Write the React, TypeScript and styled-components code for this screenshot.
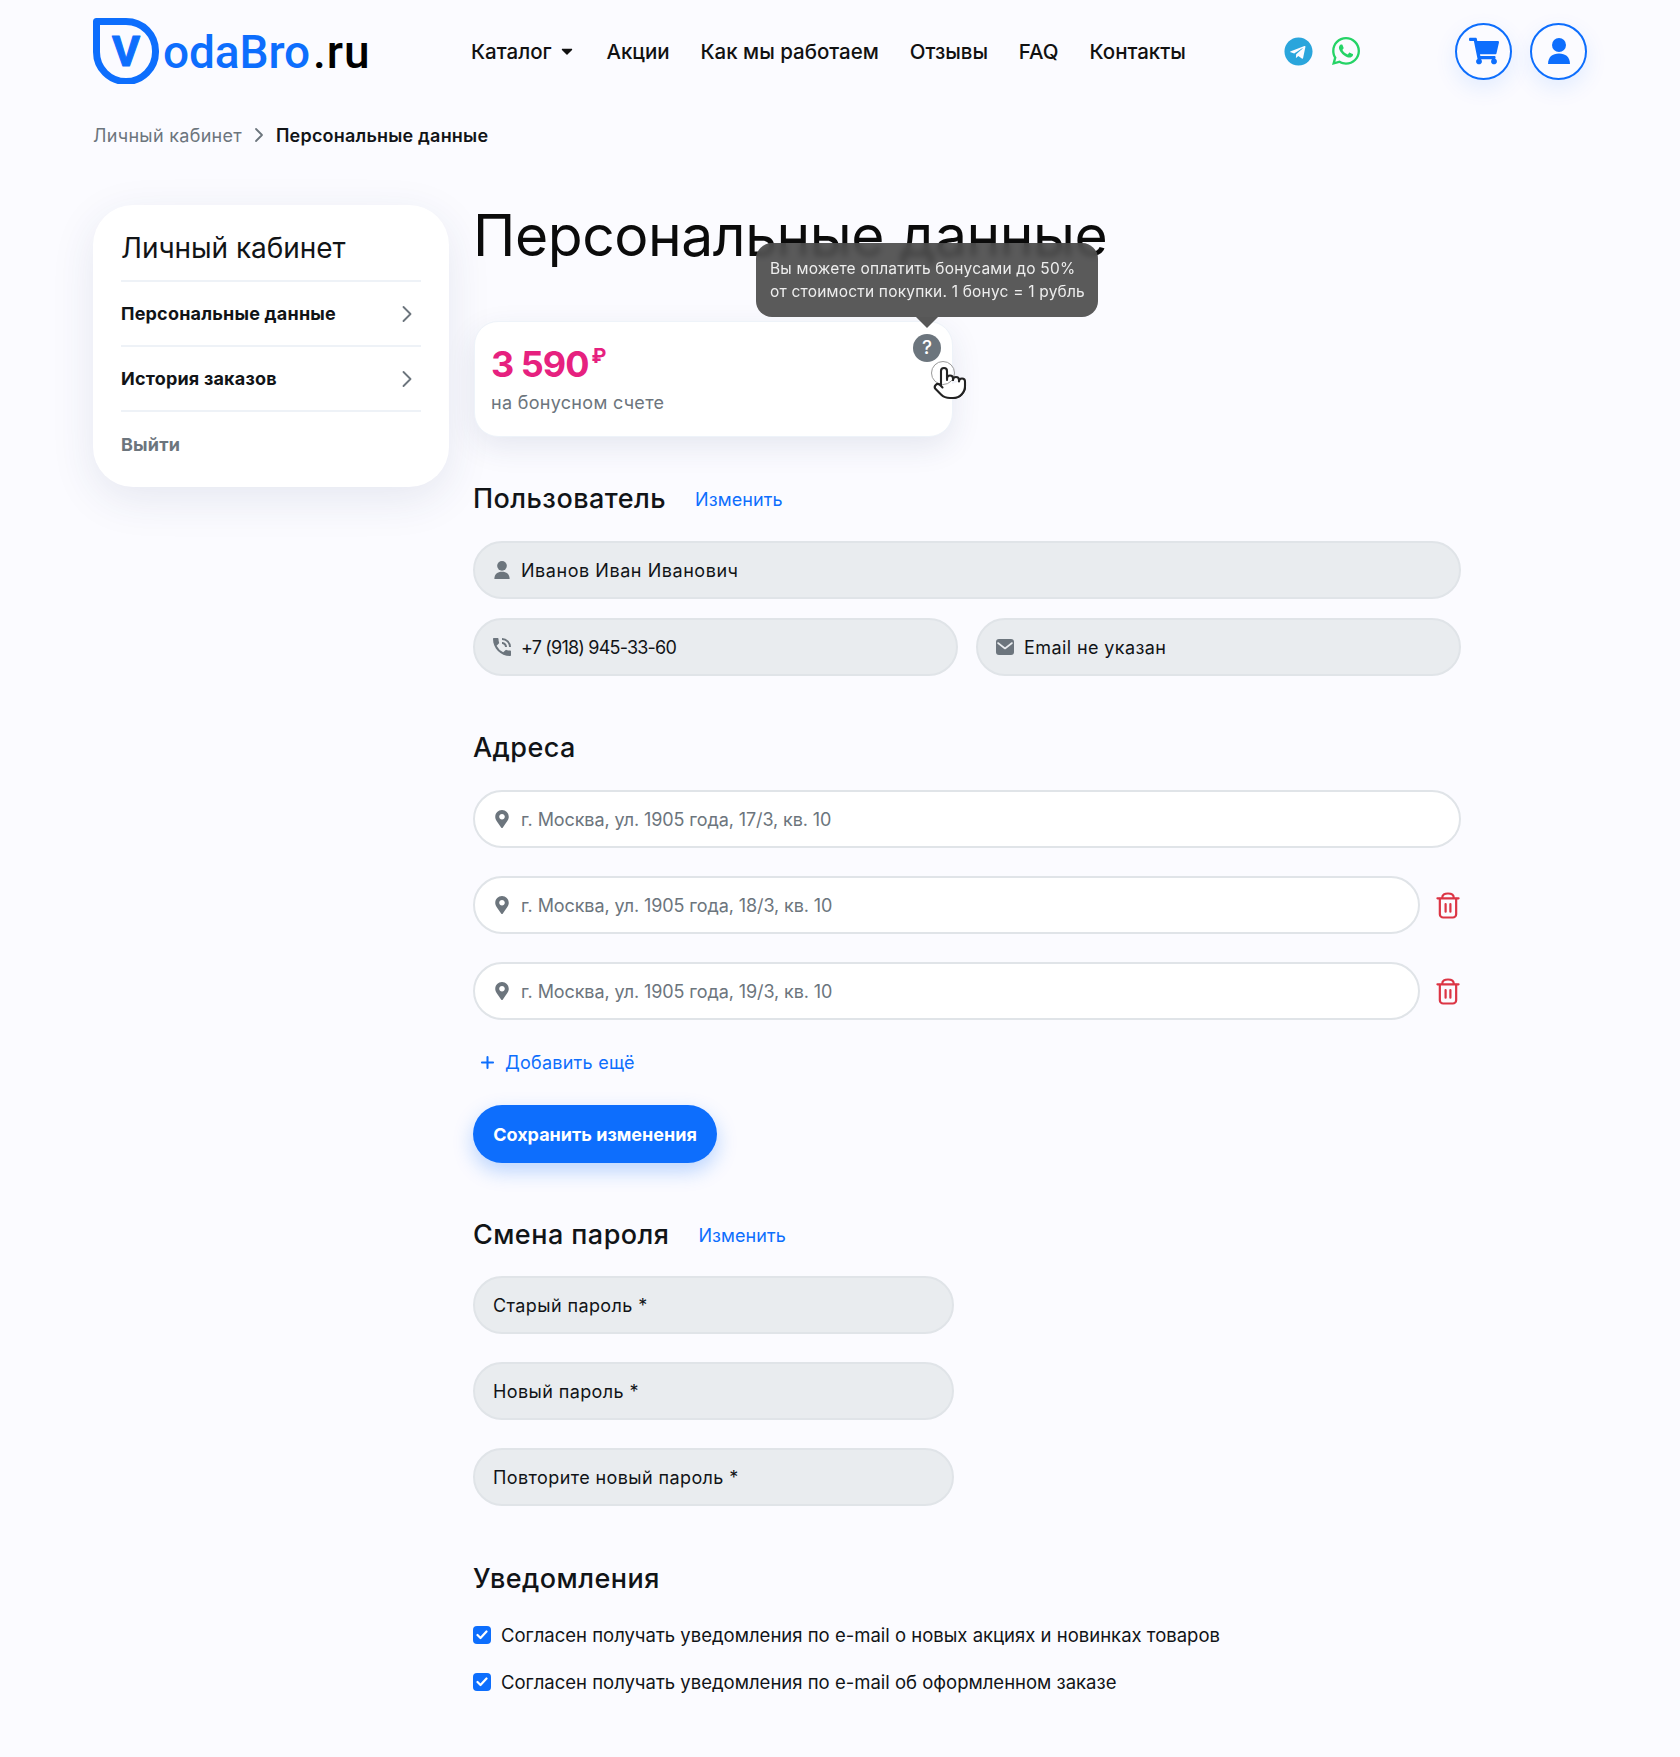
import * as React from 'react'
import styled, { createGlobalStyle } from 'styled-components'
import { ChevronRight, Plus, Pointer } from 'lucide-react'
import { FaCaretDown, FaMapMarkerAlt, FaShoppingCart, FaTelegram, FaWhatsapp } from 'react-icons/fa'
import { MdPhoneInTalk } from 'react-icons/md'

const blue = '#0d6efd'
const gray = '#6c757d'
const dark = '#111417'

const GlobalStyle = createGlobalStyle`
  html, body { margin: 0; padding: 0; background: #fbfbff; }
  body { font-family: Inter, 'Noto Sans', sans-serif; color: ${dark}; }
  * { box-sizing: border-box; }
`

const Page = styled.div`
  width: 1680px;
  min-height: 1757px;
  padding: 0 93px 64px 93px;
`
const Header = styled.header`
  height: 102px;
  display: flex;
  align-items: center;
`
const Logo = styled.div`
  width: 278px;
  margin-right: 100px;
  display: flex;
  align-items: center;
  gap: 4px;
  flex: none;
  svg {
    flex: none;
  }
`
const LogoText = styled.div`
  font-family: Roboto, sans-serif;
  font-size: 46px;
  font-weight: 500;
  line-height: 66px;
  letter-spacing: -0.1px;
  padding-top: 1px;
  color: ${blue};
  white-space: nowrap;
  b {
    font-weight: 500;
    letter-spacing: 1px;
    margin-left: 3px;
    color: #000;
  }
`
const Nav = styled.nav`
  width: 715px;
  display: flex;
  justify-content: space-between;
  align-items: center;
  flex: none;
`
const NavItem = styled.a`
  display: flex;
  align-items: center;
  gap: 6px;
  font-size: 20.5px;
  font-weight: 500;
  letter-spacing: 0;
  color: #111;
  white-space: nowrap;
`
const Socials = styled.div`
  margin-left: 98px;
  display: flex;
  align-items: center;
  gap: 17px;
  font-size: 29px;
  line-height: 0;
`
const Actions = styled.div`
  margin-left: auto;
  display: flex;
  gap: 18px;
`
const RoundButton = styled.div`
  width: 57px;
  height: 57px;
  border-radius: 50%;
  border: 2px solid ${blue};
  background: #fbfbff;
  color: ${blue};
  display: flex;
  align-items: center;
  justify-content: center;
  box-shadow: 0 8px 22px rgba(13, 110, 253, 0.1);
`
const Breadcrumbs = styled.div`
  margin-top: 22px;
  height: 22px;
  display: flex;
  align-items: center;
  gap: 5px;
  font-size: 18px;
  letter-spacing: 0.3px;
  color: ${gray};
  b {
    font-weight: 600;
    letter-spacing: 0.2px;
    color: ${dark};
  }
`
const Content = styled.div`
  margin-top: 59px;
  display: flex;
  align-items: flex-start;
  gap: 24px;
`
const Sidebar = styled.aside`
  width: 356px;
  height: 282px;
  flex: none;
  padding: 28px 28px 0 28px;
  background: #fff;
  border-radius: 40px;
  box-shadow: 0 12px 44px rgba(40, 60, 110, 0.1);
`
const SidebarTitle = styled.div`
  font-size: 28px;
  line-height: 30px;
  letter-spacing: -0.05px;
  padding-bottom: 17px;
  border-bottom: 2px solid #eef2f7;
`
const SideLink = styled.div`
  height: 65px;
  display: flex;
  align-items: center;
  justify-content: space-between;
  font-size: 18px;
  font-weight: 700;
  letter-spacing: 0.2px;
  border-bottom: 2px solid #eef2f7;
  color: ${dark};
`
const SideExit = styled(SideLink)`
  border-bottom: none;
  color: ${gray};
`
const Main = styled.main`
  width: 988px;
`
const Title = styled.h1`
  margin: 0 0 54px 0;
  font-size: 57px;
  line-height: 62px;
  font-weight: 400;
  letter-spacing: -0.45px;
  color: #0b0b0b;
  white-space: nowrap;
`
const BonusCard = styled.div`
  position: relative;
  width: 479px;
  height: 116px;
  margin-left: 1px;
  padding: 21px 16px;
  background: #fff;
  border-radius: 24px;
  border: 1px solid #eef3f9;
  box-shadow: 0 10px 30px rgba(40, 60, 110, 0.1);
`
const BonusValue = styled.div`
  font-size: 36px;
  line-height: 42px;
  font-weight: 700;
  letter-spacing: -1px;
  color: #e6217f;
  sup {
    font-size: 20px;
    line-height: 0;
    vertical-align: 14px;
    margin-left: 3px;
  }
`
const BonusCaption = styled.div`
  margin-top: 7px;
  font-size: 18px;
  line-height: 22px;
  letter-spacing: 0.3px;
  color: ${gray};
`
const Tooltip = styled.div`
  position: absolute;
  left: 281px;
  top: -79px;
  width: 342px;
  height: 74px;
  padding: 14px 14px;
  border-radius: 16px;
  background: rgba(72, 72, 72, 0.9);
  backdrop-filter: blur(3px);
  color: #eeeeee;
  font-size: 15.5px;
  line-height: 23px;
  letter-spacing: 0.2px;
  white-space: nowrap;
  &::after {
    content: '';
    position: absolute;
    left: 160px;
    bottom: -11px;
    border-left: 11px solid transparent;
    border-right: 11px solid transparent;
    border-top: 11px solid #575757;
  }
`
const Hint = styled.div`
  position: absolute;
  left: 438px;
  top: 12px;
  width: 28px;
  height: 28px;
  border-radius: 50%;
  background: ${gray};
  color: #fff;
  font-size: 19px;
  font-weight: 500;
  line-height: 28px;
  text-align: center;
`
const CursorMark = styled.div`
  position: absolute;
  left: 456px;
  top: 39px;
  width: 42px;
  height: 44px;
  color: #222;
  &::before {
    content: '';
    position: absolute;
    left: 0;
    top: 0;
    width: 22px;
    height: 22px;
    border-radius: 50%;
    border: 1px solid #9a9a9a;
    background: rgba(255, 255, 255, 0.6);
  }
  svg {
    position: absolute;
    left: 1px;
    top: 4px;
    fill: #fff;
  }
`
const Section = styled.section`
  margin-top: 55px;
`
const FirstSection = styled(Section)`
  margin-top: 45px;
`
const LastSection = styled(Section)`
  margin-top: 56px;
`
const SectionHead = styled.div<{ $below?: number }>`
  display: flex;
  align-items: center;
  gap: 29px;
  height: 34px;
  margin-bottom: ${p => p.$below ?? 25}px;
`
const SectionTitle = styled.h2`
  margin: 0;
  font-size: 27px;
  line-height: 34px;
  font-weight: 500;
  letter-spacing: 0.45px;
  color: ${dark};
`
const TextLink = styled.a`
  display: flex;
  align-items: center;
  gap: 8px;
  font-size: 18px;
  letter-spacing: 0.1px;
  color: ${blue};
`
const Stack = styled.div<{ $gap: number }>`
  display: flex;
  flex-direction: column;
  gap: ${p => p.$gap}px;
`
const TwoCols = styled.div`
  display: grid;
  grid-template-columns: 485px 485px;
  gap: 18px;
`
const Narrow = styled(Stack)`
  width: 481px;
`
const Field = styled.div<{ $filled?: boolean; $spacing?: number }>`
  flex: 1;
  height: 58px;
  padding: 0 18px;
  display: flex;
  align-items: center;
  gap: 10px;
  border-radius: 29px;
  border: 2px solid #e0e4e8;
  background: ${p => (p.$filled ? '#e9ecef' : '#fff')};
  color: ${p => (p.$filled ? dark : gray)};
  font-size: 18px;
  letter-spacing: ${p => p.$spacing ?? 0.4}px;
  white-space: nowrap;
  svg {
    flex: none;
    width: 18px;
    height: 18px;
    color: ${gray};
    fill: ${gray};
  }
`
const FieldWide = styled(Field)`
  flex: none;
`
const PhoneIcon = styled(MdPhoneInTalk)`
  && {
    width: 24px;
    height: 24px;
    margin: 0 -3px;
  }
`
const AddressRow = styled.div`
  display: flex;
  align-items: center;
  gap: 16px;
`
const TrashSlot = styled.div`
  width: 25px;
  display: flex;
  line-height: 0;
`
const AddMore = styled(TextLink)`
  margin-top: 31px;
  height: 22px;
  padding-left: 5px;
  letter-spacing: 0.25px;
`
const SaveButton = styled.button`
  display: block;
  margin-top: 32px;
  width: 244px;
  height: 58px;
  border: none;
  border-radius: 29px;
  background: ${blue};
  color: #fff;
  font-family: inherit;
  font-size: 18px;
  font-weight: 700;
  letter-spacing: 0;
  box-shadow: 0 8px 20px rgba(13, 110, 253, 0.28);
`
const CheckRow = styled.label`
  display: flex;
  align-items: center;
  gap: 10px;
  height: 22px;
  font-size: 18.5px;
  letter-spacing: 0;
  color: ${dark};
  & + & {
    margin-top: 25px;
  }
`
const CheckBox = styled.span`
  width: 18px;
  height: 18px;
  border-radius: 4px;
  background: ${blue};
  display: flex;
  align-items: center;
  justify-content: center;
`

const UserGlyph = ({ size }: { size: number }) => (
  <svg width={size} height={size * 1.18} viewBox="0 0 22 26" fill="currentColor">
    <circle cx="11" cy="7" r="7" />
    <path d="M0 26C0 19 4.5 15.5 11 15.5S22 19 22 26Z" />
  </svg>
)

const MailGlyph = () => (
  <svg viewBox="0 0 18 18">
    <rect x="0" y="1" width="18" height="16" rx="3" />
    <path d="M2 5L9 10.5L16 5" fill="none" stroke="#e9ecef" strokeWidth="1.6" strokeLinecap="round" strokeLinejoin="round" />
  </svg>
)

const Trash = () => (
  <TrashSlot>
    <svg width="24" height="27" viewBox="0 0 25 28" fill="none" stroke="#dc3545" strokeWidth="2.3" strokeLinecap="round">
      <path d="M1.5 6.5H23.5" />
      <path d="M6.5 6C6.5 2.6 9 1.5 12.5 1.5S18.5 2.6 18.5 6" />
      <path d="M4 7V23A3.5 3.5 0 0 0 7.5 26.5H17.5A3.5 3.5 0 0 0 21 23V7" />
      <path d="M10 12.5V20.5M15 12.5V20.5" />
    </svg>
  </TrashSlot>
)

const Tick = () => (
  <svg width="12" height="10" viewBox="0 0 12 10" fill="none" stroke="#fff" strokeWidth="2.2" strokeLinecap="round" strokeLinejoin="round">
    <path d="M1.5 5L4.5 8L10.5 1.5" />
  </svg>
)

const BrandMark = () => (
  <svg width="66" height="66" viewBox="0 0 66 66" fill="none">
    <path
      d="M3.5 3.5H33C50 3.5 62.5 17 62.5 33V34A29 29 0 0 1 3.5 34Z"
      stroke={blue}
      strokeWidth="7"
      strokeLinejoin="round"
    />
    <text
      x="33"
      y="48"
      textAnchor="middle"
      fontFamily="Roboto, sans-serif"
      fontWeight="700"
      fontSize="43"
      fill={blue}
      stroke={blue}
      strokeWidth="1"
      strokeLinejoin="round"
    >
      V
    </text>
  </svg>
)

const addresses = ['г. Москва, ул. 1905 года, 17/3, кв. 10', 'г. Москва, ул. 1905 года, 18/3, кв. 10', 'г. Москва, ул. 1905 года, 19/3, кв. 10']

const App = () => (
  <Page>
    <GlobalStyle />
    <Header>
      <Logo>
        <BrandMark />
        <LogoText>
          odaBro<b>.ru</b>
        </LogoText>
      </Logo>
      <Nav>
        <NavItem>
          Каталог <FaCaretDown size={18} />
        </NavItem>
        <NavItem>Акции</NavItem>
        <NavItem>Как мы работаем</NavItem>
        <NavItem>Отзывы</NavItem>
        <NavItem>FAQ</NavItem>
        <NavItem>Контакты</NavItem>
      </Nav>
      <Socials>
        <FaTelegram color="#2aa5dc" />
        <FaWhatsapp size={32} color="#25d366" />
      </Socials>
      <Actions>
        <RoundButton>
          <FaShoppingCart size={30} />
        </RoundButton>
        <RoundButton>
          <UserGlyph size={22} />
        </RoundButton>
      </Actions>
    </Header>
    <Breadcrumbs>
      Личный кабинет <ChevronRight size={24} strokeWidth={1.8} /> <b>Персональные данные</b>
    </Breadcrumbs>
    <Content>
      <Sidebar>
        <SidebarTitle>Личный кабинет</SidebarTitle>
        <SideLink>
          Персональные данные <ChevronRight size={28} strokeWidth={1.6} color={gray} />
        </SideLink>
        <SideLink>
          История заказов <ChevronRight size={28} strokeWidth={1.6} color={gray} />
        </SideLink>
        <SideExit>Выйти</SideExit>
      </Sidebar>
      <Main>
        <Title>Персональные данные</Title>
        <BonusCard>
          <BonusValue>
            3 590<sup>₽</sup>
          </BonusValue>
          <BonusCaption>на бонусном счете</BonusCaption>
          <Tooltip>
            Вы можете оплатить бонусами до 50%
            <br />
            от стоимости покупки. 1 бонус = 1 рубль
          </Tooltip>
          <Hint>?</Hint>
          <CursorMark>
            <Pointer size={36} strokeWidth={1.4} />
          </CursorMark>
        </BonusCard>
        <FirstSection>
          <SectionHead>
            <SectionTitle>Пользователь</SectionTitle>
            <TextLink>Изменить</TextLink>
          </SectionHead>
          <Stack $gap={19}>
            <FieldWide $filled $spacing={0.55}>
              <UserGlyph size={15} /> Иванов Иван Иванович
            </FieldWide>
            <TwoCols>
              <Field $filled $spacing={-0.8}>
                <PhoneIcon /> +7 (918) 945-33-60
              </Field>
              <Field $filled>
                <MailGlyph /> Email не указан
              </Field>
            </TwoCols>
          </Stack>
        </FirstSection>
        <Section>
          <SectionHead>
            <SectionTitle>Адреса</SectionTitle>
          </SectionHead>
          <Stack $gap={28}>
            {addresses.map((address, i) => (
              <AddressRow key={address}>
                <Field $spacing={-0.1}>
                  <FaMapMarkerAlt /> {address}
                </Field>
                {i > 0 && <Trash />}
              </AddressRow>
            ))}
          </Stack>
          <AddMore>
            <Plus size={19} strokeWidth={2.6} /> Добавить ещё
          </AddMore>
          <SaveButton>Сохранить изменения</SaveButton>
        </Section>
        <Section>
          <SectionHead $below={24}>
            <SectionTitle>Смена пароля</SectionTitle>
            <TextLink>Изменить</TextLink>
          </SectionHead>
          <Narrow $gap={28}>
            <FieldWide $filled>Старый пароль *</FieldWide>
            <FieldWide $filled>Новый пароль *</FieldWide>
            <FieldWide $filled>Повторите новый пароль *</FieldWide>
          </Narrow>
        </Section>
        <LastSection>
          <SectionHead $below={28}>
            <SectionTitle>Уведомления</SectionTitle>
          </SectionHead>
          <CheckRow>
            <CheckBox>
              <Tick />
            </CheckBox>
            Согласен получать уведомления по e-mail о новых акциях и новинках товаров
          </CheckRow>
          <CheckRow>
            <CheckBox>
              <Tick />
            </CheckBox>
            Согласен получать уведомления по e-mail об оформленном заказе
          </CheckRow>
        </LastSection>
      </Main>
    </Content>
  </Page>
)

export default App
